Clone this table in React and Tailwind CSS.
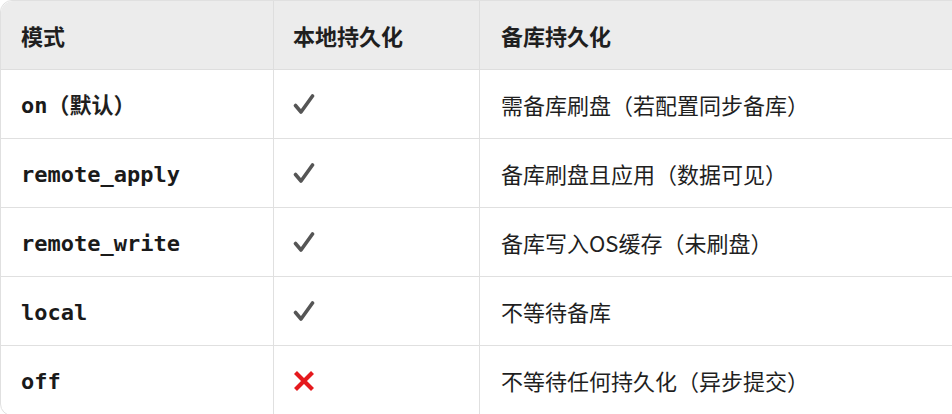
import React from 'react';

const rows = [
  { mode: 'on', suffix: '（默认）', local: true, standby: '需备库刷盘（若配置同步备库）' },
  { mode: 'remote_apply', local: true, standby: '备库刷盘且应用（数据可见）' },
  { mode: 'remote_write', local: true, standby: '备库写入OS缓存（未刷盘）' },
  { mode: 'local', local: true, standby: '不等待备库' },
  { mode: 'off', local: false, standby: '不等待任何持久化（异步提交）' },
];

const Check = () => (
  <svg width="22" height="22" viewBox="0 0 22 22" className="block">
    <path d="M2.5 12.5 L8 19 L19.5 3" fill="none" stroke="#555" strokeWidth="3.6" strokeLinecap="round" strokeLinejoin="round" />
  </svg>
);

const Cross = () => (
  <svg width="22" height="22" viewBox="0 0 22 22" className="block">
    <path d="M2.5 2.5 L19.5 19.5 M19.5 2.5 L2.5 19.5" fill="none" stroke="#e5191d" strokeWidth="4.2" />
  </svg>
);

const cjk = { fontFamily: '"Noto Sans CJK SC", "Noto Sans", sans-serif' };

export default function App() {
  return (
    <div className="w-[952px] h-[414px] overflow-hidden bg-white">
      <table
        className="w-[980px] table-fixed border-separate border-spacing-0 rounded-tl-xl rounded-bl-xl border border-[#e0e0e0] text-[#1f1f1f] text-[22px]"
        style={cjk}
      >
        <colgroup>
          <col className="w-[272px]" />
          <col className="w-[206px]" />
          <col />
        </colgroup>
        <thead>
          <tr className="h-[69px] bg-[#ececec]">
            <th className="text-left font-bold pl-5 pr-2 rounded-tl-xl border-b border-[#dedede]">模式</th>
            <th className="text-left font-bold pl-[19px] pr-2 border-l border-b border-[#dedede]">本地持久化</th>
            <th className="text-left font-bold pl-[21px] border-l border-b border-[#dedede]">备库持久化</th>
          </tr>
        </thead>
        <tbody>
          {rows.map((r, i) => {
            const last = i === rows.length - 1;
            const bb = last ? '' : 'border-b';
            return (
              <tr key={r.mode} className="h-[69px]">
                <td className={`pl-5 pr-2 border-[#e0e0e0] ${bb}`}>
                  <span className="font-bold text-[#1a1a1a]" style={{ fontFamily: '"DejaVu Sans Mono", monospace' }}>
                    {r.mode}
                  </span>
                  {r.suffix && <span className="font-bold">{r.suffix}</span>}
                </td>
                <td className={`pl-[19px] pr-2 border-l border-[#e0e0e0] ${bb}`}>
                  {r.local ? <Check /> : <Cross />}
                </td>
                <td className={`pl-[21px] border-l border-[#e0e0e0] ${bb}`}>{r.standby}</td>
              </tr>
            );
          })}
        </tbody>
      </table>
    </div>
  );
}
